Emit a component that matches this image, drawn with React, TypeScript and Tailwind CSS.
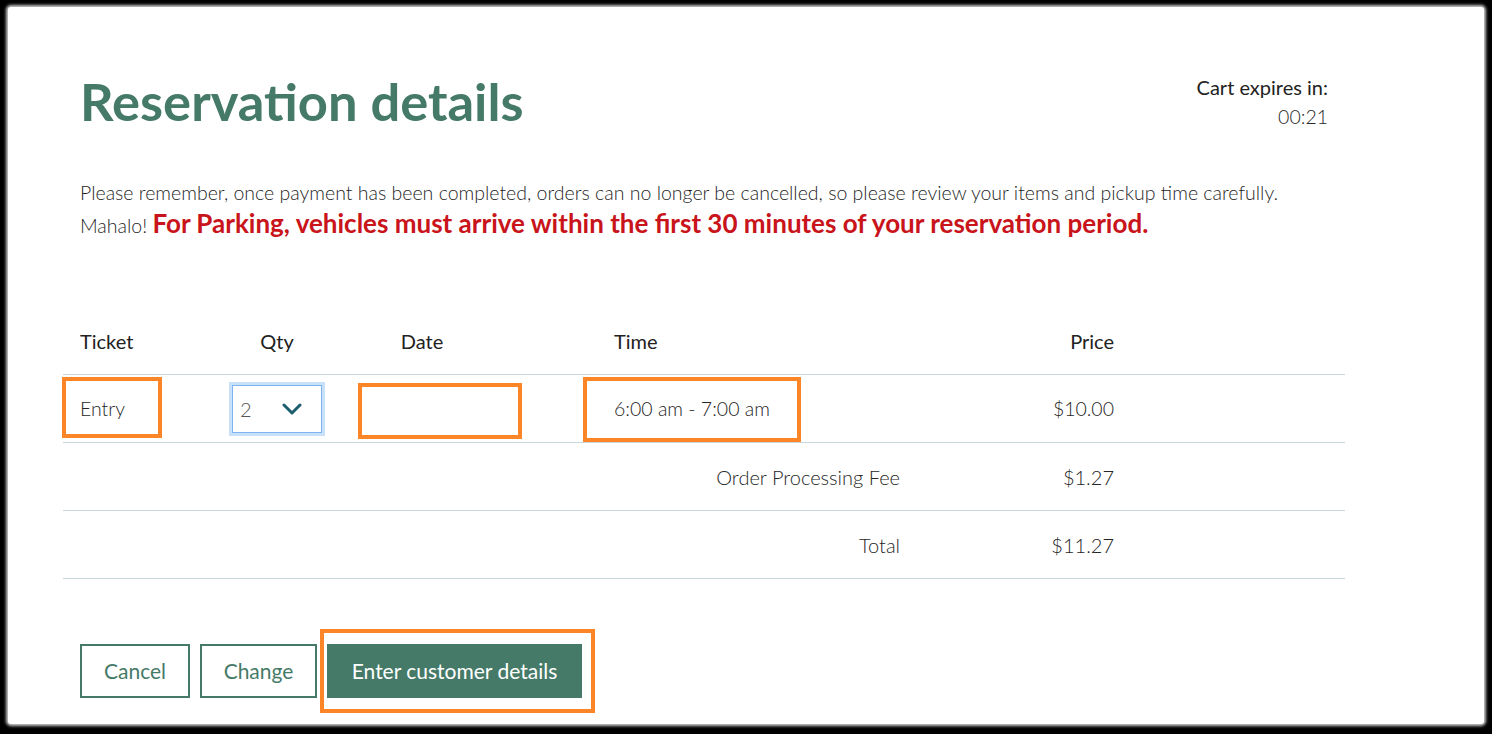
import React from "react";

const green = "text-[#467a68]";

function Annot({ className }: { className: string }) {
  return (
    <div
      className={`pointer-events-none absolute border-[4px] border-[#fb8527] ${className}`}
    />
  );
}

function QtySelect() {
  return (
    <div className="flex h-[48px] w-[90px] items-center justify-between border border-[#7db4ef] bg-white pl-[7px] pr-[19px] shadow-[0_0_0_3px_#c9e0fb]">
      <span className="text-[20px] font-light text-[#555]">2</span>
      <svg width="20" height="12" viewBox="0 0 20 12" fill="none">
        <path
          d="M2 2l8 8 8-8"
          stroke="#1b5d6c"
          strokeWidth="3"
          strokeLinecap="round"
          strokeLinejoin="round"
        />
      </svg>
    </div>
  );
}

const cols =
  "grid grid-cols-[137px_154px_136px_107px_320px_214px_214px] h-[68px] items-center border-b border-[#c9d5dc]";

export default function App() {
  return (
    <div
      className="h-[734px] w-[1492px] bg-black pl-[8px] pt-[7px]"
      style={{ fontFamily: "Lato, 'Noto Sans', sans-serif" }}
    >
      <div className="h-[717px] w-[1476px] rounded-[3px] bg-white pl-[55px] pt-[64px] shadow-[0_0_3px_2px_#c9c9c9]">
        <div className="w-[1282px] text-[#2b2b2b]">
          <div className="flex items-start justify-between pl-[17px] pr-[17px]">
            <h1 className={`text-[52.5px] font-bold leading-[60px] ${green}`}>
              Reservation details
            </h1>
            <div className="pt-[1px] text-right text-[20px] leading-[30px]">
              <div className="font-normal text-[#222]">Cart expires in:</div>
              <div className="text-[19.5px] font-light text-[#2a2a2a]">00:21</div>
            </div>
          </div>

          <p className="mt-[46px] pl-[17px] text-[19.5px] font-light leading-[30px] text-[#1f1f1f]">
            Please remember, once payment has been completed, orders can no
            longer be cancelled, so please review your items and pickup time
            carefully.
            <br />
            Mahalo!{" "}
            <span className="text-[26px] font-bold leading-[30px] text-[#c8141a]">
              For Parking, vehicles must arrive within the first 30 minutes of
              your reservation period.
            </span>
          </p>

          <div className="mt-[66px] text-[20px] text-[#222]">
            <div className={cols}>
              <div className="pl-[17px]">Ticket</div>
              <div className="text-center">Qty</div>
              <div className="text-center">Date</div>
              <div />
              <div className="pl-[17px]">Time</div>
              <div className="pr-[17px] text-right">Price</div>
              <div />
            </div>

            <div className={`${cols} text-[19.5px] font-light text-[#262626]`}>
              <div className="relative h-full">
                <div className="flex h-full items-center pl-[17px]">Entry</div>
                <Annot className="left-[-1px] top-[2px] h-[61px] w-[100px]" />
              </div>
              <div className="flex justify-center">
                <QtySelect />
              </div>
              <div className="relative h-full">
                <Annot className="left-[4px] top-[8px] h-[56px] w-[164px]" />
              </div>
              <div />
              <div className="relative h-full">
                <div className="flex h-full items-center pl-[17px]">
                  6:00 am - 7:00 am
                </div>
                <Annot className="left-[-14px] top-[2px] h-[65px] w-[218px]" />
              </div>
              <div className="pr-[17px] text-right">$10.00</div>
              <div />
            </div>

            <div className={`${cols} text-[20px] font-light text-[#262626]`}>
              <div className="col-span-5 pr-[17px] text-right">
                Order Processing Fee
              </div>
              <div className="pr-[17px] text-right">$1.27</div>
              <div />
            </div>

            <div className={`${cols} text-[20px] font-light text-[#262626]`}>
              <div className="col-span-5 pr-[17px] text-right">Total</div>
              <div className="pr-[17px] text-right">$11.27</div>
              <div />
            </div>
          </div>

          <div className="mt-[65px] flex gap-[10px] pl-[17px] text-[21px]">
            <button
              className={`h-[54px] w-[110px] border-2 border-[#467a68] bg-white ${green}`}
            >
              Cancel
            </button>
            <button
              className={`h-[54px] w-[117px] border-2 border-[#467a68] bg-white ${green}`}
            >
              Change
            </button>
            <div className="relative">
              <button className="h-[54px] w-[255px] bg-[#467a68] text-white">
                Enter customer details
              </button>
              <Annot className="left-[-7px] top-[-15px] h-[84px] w-[275px]" />
            </div>
          </div>
        </div>
      </div>
    </div>
  );
}
